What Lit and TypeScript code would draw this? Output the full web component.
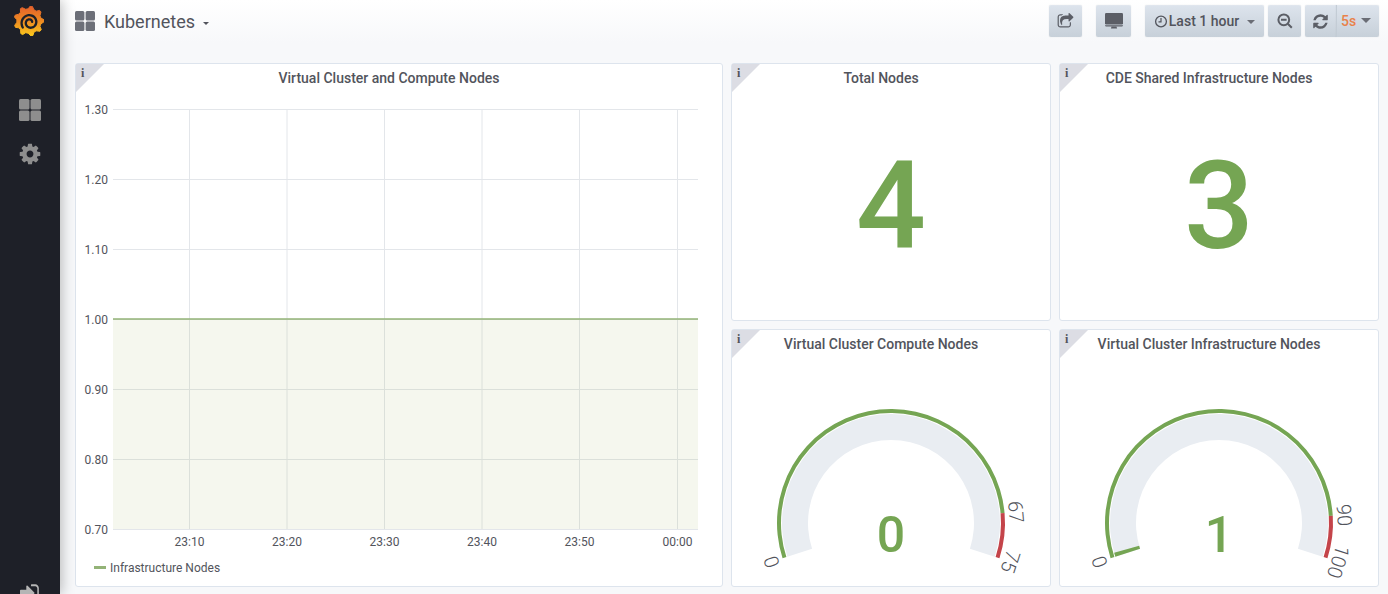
import { LitElement, html, css, svg, unsafeCSS } from "lit";
import { customElement, property } from "lit/decorators.js";

const FA_SHARE = "M1472 989v259q0 119-84.5 203.5t-203.5 84.5h-832q-119 0-203.5-84.5t-84.5-203.5v-832q0-119 84.5-203.5t203.5-84.5h255q13 0 22.5 9.5t9.5 22.5q0 27-26 32-77 26-133 60-10 4-16 4h-112q-66 0-113 47t-47 113v832q0 66 47 113t113 47h832q66 0 113-47t47-113v-214q0-19 18-29 28-13 54-37 16-16 35-8 21 9 21 29zm237-496l-384 384q-18 19-45 19-12 0-25-5-39-17-39-59v-192h-160q-323 0-438 131-119 137-74 473 3 23-20 34-8 2-12 2-16 0-26-13-10-14-21-31t-39.5-68.5-49.5-99.5-38.5-114-17.5-122q0-49 3.5-91t14-90 28-88 47-81.5 68.5-74 94.5-61.5 124.5-48.5 159.5-30.5 196.5-11h160v-192q0-42 39-59 13-5 25-5 26 0 45 19l384 384q19 19 19 45t-19 45z";
const FA_REFRESH = "M1639 1056q0 5-1 7-64 268-268 434.5t-478 166.5q-146 0-282.5-55t-243.5-157l-129 129q-19 19-45 19t-45-19-19-45v-448q0-26 19-45t45-19h448q26 0 45 19t19 45-19 45l-137 137q71 66 161 102t187 36q134 0 250-65t186-179q11-17 53-117 8-23 30-23h192q13 0 22.5 9.5t9.5 22.5zm25-800v448q0 26-19 45t-45 19h-448q-26 0-45-19t-19-45 19-45l138-138q-148-137-349-137-134 0-250 65t-186 179q-11 17-53 117-8 23-30 23h-199q-13 0-22.5-9.5t-9.5-22.5v-7q65-268 270-434.5t480-166.5q146 0 284 55.5t245 156.5l130-129q19-19 45-19t45 19 19 45z";
const FA_COG = "M1152 896q0-106-75-181t-181-75-181 75-75 181 75 181 181 75 181-75 75-181zm512-109v222q0 12-8 23t-20 13l-185 28q-19 54-39 91 35 50 107 138 10 12 10 25t-9 23q-27 37-99 108t-94 71q-12 0-26-9l-138-108q-44 23-91 38-16 136-29 186-7 28-36 28h-222q-14 0-24.5-8.5t-11.5-21.5l-28-184q-49-16-90-37l-141 107q-10 9-25 9-14 0-25-11-126-114-165-168-7-10-7-23 0-12 8-23 15-21 51-66.5t54-70.5q-27-50-41-99l-183-27q-13-2-21-12.5t-8-23.5v-222q0-12 8-23t19-13l186-28q14-46 39-92-40-57-107-138-10-12-10-24 0-10 9-23 26-36 98.5-107.5t94.5-71.5q13 0 26 10l138 107q44-23 91-38 16-136 29-186 7-28 36-28h222q14 0 24.5 8.5t11.5 21.5l28 184q49 16 90 37l142-107q9-9 24-9 13 0 25 10 129 119 165 170 7 8 7 22 0 12-8 23-15 21-51 66.5t-54 70.5q26 50 41 98l183 28q13 2 21 12.5t8 23.5z";
const FA_SIGNIN = "M1184 896q0 26-19 45l-544 544q-19 19-45 19t-45-19-19-45v-288h-448q-26 0-45-19t-19-45v-384q0-26 19-45t45-19h448v-288q0-26 19-45t45-19 45 19l544 544q19 19 19 45zm352-352v704q0 119-84.5 203.5t-203.5 84.5h-320q-32 0-32-32v-96q0-32 32-32h320q66 0 113-47t47-113v-704q0-66-47-113t-113-47h-320q-32 0-32-32v-96q0-32 32-32h320q119 0 203.5 84.5t84.5 203.5z";

const GREEN = "#75a553";
const RED = "#c4444a";

function polar(cx: number, cy: number, r: number, deg: number) {
  const a = (deg * Math.PI) / 180;
  return [cx + r * Math.sin(a), cy - r * Math.cos(a)];
}

// annular sector, angles measured clockwise from the top
function band(cx: number, cy: number, r0: number, r1: number, from: number, to: number) {
  const large = to - from > 180 ? 1 : 0;
  const [ax, ay] = polar(cx, cy, r1, from);
  const [bx, by] = polar(cx, cy, r1, to);
  const [dx, dy] = polar(cx, cy, r0, to);
  const [ex, ey] = polar(cx, cy, r0, from);
  return `M${ax} ${ay}A${r1} ${r1} 0 ${large} 1 ${bx} ${by}L${dx} ${dy}A${r0} ${r0} 0 ${large} 0 ${ex} ${ey}Z`;
}

function gearPoints() {
  const pts: string[] = [];
  const teeth = 9;
  for (let i = 0; i < teeth; i++) {
    const a = (i * 360) / teeth + 10;
    for (const [off, r] of [[-14, 12.2], [-5, 15], [3, 15], [14, 12.2]]) {
      const [x, y] = polar(15, 15, r, a + off);
      pts.push(`${x.toFixed(2)},${y.toFixed(2)}`);
    }
  }
  return pts.join(" ");
}

// logo swirl, running clockwise and inward from the lower left
function swirl() {
  const pts: string[] = [];
  for (let i = 0; i <= 60; i++) {
    const t = i / 60;
    const [x, y] = polar(16, 16.5, 8.8 - 6.6 * t, -125 + 560 * t);
    pts.push(`${x.toFixed(2)} ${y.toFixed(2)}`);
  }
  return `M${pts.join("L")}`;
}

@customElement("gauge-panel")
class GaugePanel extends LitElement {
  @property({ type: Number }) value = 0;
  @property({ type: Number }) threshold = 0;
  @property({ type: Number }) max = 100;

  static styles = css`
    :host {
      display: block;
    }
    svg {
      display: block;
    }
    .tick {
      font: 300 20px Roboto, sans-serif;
      fill: #52545c;
      text-anchor: middle;
      dominant-baseline: central;
    }
    .val {
      font: 500 50px Roboto, sans-serif;
      fill: ${unsafeCSS(GREEN)};
      text-anchor: middle;
    }
  `;

  render() {
    const cx = 159;
    const cy = 165;
    const start = -108;
    const sweep = 216;
    const at = (v: number) => start + (sweep * v) / this.max;
    const ticks = [0, this.threshold, this.max];
    return html`<svg width="318" height="228" viewBox="0 0 318 228">
      <path d=${band(cx, cy, 83, 109, start, start + sweep)} fill="#e9edf2"></path>
      <path d=${band(cx, cy, 110, 114, start, at(this.threshold))} fill=${GREEN}></path>
      <path d=${band(cx, cy, 110, 114, at(this.threshold), start + sweep)} fill=${RED}></path>
      ${this.value > 0
        ? svg`<path d=${band(cx, cy, 83, 109, start, at(this.value))} fill=${GREEN}></path>`
        : ""}
      ${ticks.map((t) => {
        const a = at(t);
        const [x, y] = polar(cx, cy, 125.5, a);
        return svg`<text class="tick" transform="translate(${x} ${y}) rotate(${a})">${t}</text>`;
      })}
      <text class="val" x=${cx} y="194">${this.value}</text>
    </svg>`;
  }
}

@customElement("graph-panel")
class GraphPanel extends LitElement {
  static styles = css`
    :host {
      display: block;
    }
    svg {
      display: block;
    }
    .label {
      font: 400 12px Roboto, sans-serif;
      fill: #52545c;
    }
    .legend {
      display: flex;
      align-items: center;
      gap: 4px;
      height: 19px;
      padding-left: 18px;
      font: 400 12px Roboto, sans-serif;
      color: #52545c;
    }
    .swatch {
      width: 12px;
      height: 3px;
      background: #93b377;
    }
  `;

  render() {
    const ys = ["1.30", "1.20", "1.10", "1.00", "0.90", "0.80", "0.70"];
    const xs = [
      [113.5, "23:10"],
      [211, "23:20"],
      [308.5, "23:30"],
      [406, "23:40"],
      [503.5, "23:50"],
      [601.5, "00:00"],
    ] as [number, string][];
    return html`<svg width="646" height="466" viewBox="0 0 646 466">
        ${xs.map(([x]) => svg`<line x1=${x} x2=${x} y1="17" y2="437" stroke="#e3e6ea"></line>`)}
        ${ys.map((_, i) => svg`<line x1="37" x2="622" y1=${17.5 + i * 70} y2=${17.5 + i * 70} stroke="#e3e6ea"></line>`)}
        <rect x="37" y="227" width="585" height="210" fill="#8fa848" fill-opacity="0.09"></rect>
        <line x1="37" x2="622" y1="227" y2="227" stroke="#93b377" stroke-width="1.5"></line>
        ${ys.map((y, i) => svg`<text class="label" x="32" y=${21.5 + i * 70} text-anchor="end">${y}</text>`)}
        ${xs.map(([x, t]) => svg`<text class="label" x=${x} y="454" text-anchor="middle">${t}</text>`)}
      </svg>
      <div class="legend"><span class="swatch"></span>Infrastructure Nodes</div>`;
  }
}

@customElement("app-root")
class AppRoot extends LitElement {
  static styles = css`
    :host {
      display: flex;
      width: 1388px;
      height: 594px;
      overflow: hidden;
      background: #f7f8fa;
      font-family: Roboto, sans-serif;
      color: #52545c;
    }
    .side {
      flex: none;
      width: 60px;
      height: 594px;
      box-sizing: border-box;
      background: #1e2028;
      box-shadow: 2px 0 12px rgba(0, 0, 0, 0.25);
      display: flex;
      flex-direction: column;
      align-items: center;
      padding-top: 6px;
      position: relative;
      z-index: 1;
    }
    .logo {
      display: block;
      margin-left: -3px;
    }
    .side-grid {
      margin-top: 63px;
      fill: #8e8e8e;
    }
    .side-cog {
      margin-top: 21px;
      fill: #8e8e8e;
    }
    .side-in {
      margin-top: auto;
      margin-bottom: -10px;
      margin-left: 1px;
      fill: #b5b5b5;
    }
    .main {
      flex: 1;
      min-width: 0;
    }
    .top {
      height: 58px;
      padding: 5px 9px 0 15px;
      display: flex;
      align-items: flex-start;
      background: linear-gradient(#fff, #f7f8fa 43px);
    }
    .crumb {
      display: flex;
      align-items: center;
      height: 32px;
      font-size: 18px;
      gap: 9px;
    }
    .crumb-icon {
      fill: #6c6f78;
    }
    .caret {
      width: 0;
      height: 0;
      border: 4px solid transparent;
      border-top-color: currentColor;
      border-bottom: 0;
      margin-top: 3px;
    }
    .crumb .caret {
      margin-left: -1px;
      margin-top: 4px;
      border-width: 3px;
      border-bottom: 0;
    }
    .actions {
      margin-left: auto;
      display: flex;
      align-items: flex-start;
    }
    .btn {
      box-sizing: border-box;
      height: 32px;
      display: flex;
      align-items: center;
      justify-content: center;
      background: linear-gradient(#dde4ed, #c7d0d9);
      border-radius: 2px;
      box-shadow: inset 0 1px 0 rgba(255, 255, 255, 0.1), 0 0 1px rgba(82, 84, 92, 0.25);
      color: #52545c;
      fill: #5b5e66;
      font-size: 14px;
      font-weight: 500;
    }
    .share {
      width: 33px;
    }
    .tv {
      width: 35px;
      margin-left: 14px;
    }
    .range {
      width: 119px;
      margin-left: 14px;
      gap: 1px;
    }
    .range .caret {
      margin-left: 7px;
      margin-top: 1px;
      color: #6a6d75;
    }
    .zoom {
      width: 33px;
      margin-left: 4px;
    }
    .refresh {
      width: 31px;
      margin-left: 4px;
      border-radius: 2px 0 0 2px;
    }
    .interval {
      width: 43px;
      justify-content: flex-start;
      padding-left: 4px;
      border-radius: 0 2px 2px 0;
      border-left: 1px solid #c3ccd5;
      color: #e9824a;
      gap: 5px;
    }
    .interval .caret {
      color: #6a6d75;
      margin-top: -2px;
      border-width: 5px;
      border-bottom: 0;
    }
    .grid {
      display: grid;
      grid-template-columns: 648px 320px 320px;
      grid-template-rows: 258px 258px;
      gap: 8px;
      padding-left: 15px;
    }
    .panel {
      position: relative;
      box-sizing: border-box;
      background: #fff;
      border: 1px solid #dde4ed;
      border-radius: 3px;
      display: flex;
      flex-direction: column;
      min-width: 0;
    }
    .tall {
      grid-row: span 2;
    }
    .title {
      flex: none;
      height: 28px;
      box-sizing: border-box;
      padding: 6px 20px 0 0;
      text-align: center;
      font-size: 14px;
      font-weight: 500;
      line-height: 17px;
    }
    .corner {
      position: absolute;
      left: 0;
      top: 0;
      width: 28px;
      height: 28px;
      background: #dcdde4;
      clip-path: polygon(0 0, 100% 0, 0 100%);
    }
    .corner-i {
      position: absolute;
      left: 5px;
      top: 2px;
      font: 700 12px "Liberation Serif", serif;
      line-height: 14px;
      color: #52545c;
    }
    .stat {
      flex: 1;
      display: flex;
      align-items: center;
      justify-content: center;
      font-size: 123px;
      font-weight: 500;
      line-height: 1;
      color: ${unsafeCSS(GREEN)};
    }
  `;

  private corner() {
    return html`<div class="corner"></div><span class="corner-i">i</span>`;
  }

  render() {
    return html`
      <nav class="side">
        <svg class="logo" width="30" height="30" viewBox="0 0 30 30">
          <defs>
            <linearGradient id="lg" x1="0" y1="0" x2="0" y2="1">
              <stop offset="0" stop-color="#e4602c"></stop>
              <stop offset="0.5" stop-color="#ee8a22"></stop>
              <stop offset="1" stop-color="#fbc81c"></stop>
            </linearGradient>
          </defs>
          <polygon points=${gearPoints()} fill="url(#lg)" stroke="url(#lg)" stroke-linejoin="round"></polygon>
          <path d=${swirl()} fill="none" stroke="#1e2028" stroke-width="2.3" stroke-linecap="round"></path>
        </svg>
        <svg class="side-grid" width="22" height="22" viewBox="0 0 22 22">
          <rect width="10.5" height="10.5" rx="1.5"></rect>
          <rect x="11.5" width="10.5" height="10.5" rx="1.5"></rect>
          <rect y="11.5" width="10.5" height="10.5" rx="1.5"></rect>
          <rect x="11.5" y="11.5" width="10.5" height="10.5" rx="1.5"></rect>
        </svg>
        <svg class="side-cog" width="24" height="24" viewBox="0 0 1792 1792"><path d=${FA_COG}></path></svg>
        <svg class="side-in" width="22" height="22" viewBox="0 0 1792 1792"><path d=${FA_SIGNIN}></path></svg>
      </nav>
      <div class="main">
        <header class="top">
          <div class="crumb">
            <svg class="crumb-icon" width="20" height="20" viewBox="0 0 20 20">
              <rect width="9.4" height="9.4" rx="1.5"></rect>
              <rect x="10.6" width="9.4" height="9.4" rx="1.5"></rect>
              <rect y="10.6" width="9.4" height="9.4" rx="1.5"></rect>
              <rect x="10.6" y="10.6" width="9.4" height="9.4" rx="1.5"></rect>
            </svg>
            <span>Kubernetes</span>
            <span class="caret"></span>
          </div>
          <div class="actions">
            <div class="btn share">
              <svg width="17" height="17" viewBox="0 0 1792 1792"><path d=${FA_SHARE}></path></svg>
            </div>
            <div class="btn tv">
              <svg width="18" height="16" viewBox="0 0 18 16">
                <rect width="18" height="11.5" rx="1.2"></rect>
                <path d="M0 12.2h18v.3a1.2 1.2 0 0 1-1.2 1H1.2a1.2 1.2 0 0 1-1.2-1z"></path>
                <path d="M6.5 13.5h5l.6 2h-6.2z"></path>
              </svg>
            </div>
            <div class="btn range">
              <svg width="14" height="14" viewBox="0 0 14 14">
                <circle cx="7" cy="7.5" r="5.4" fill="none" stroke="#52545c" stroke-width="1.3"></circle>
                <path d="M7 4v3.9H4.5" fill="none" stroke="#52545c" stroke-width="1.2"></path>
              </svg>
              <span>Last 1 hour</span>
              <span class="caret"></span>
            </div>
            <div class="btn zoom">
              <svg width="16" height="16" viewBox="0 0 16 16">
                <circle cx="6.8" cy="6.8" r="5.4" fill="none" stroke="#5b5e66" stroke-width="2"></circle>
                <path d="M4 6.8h5.6M10.8 10.8l4 4" fill="none" stroke="#5b5e66" stroke-width="2"></path>
              </svg>
            </div>
            <div class="btn refresh">
              <svg width="17" height="17" viewBox="0 0 1792 1792"><path d=${FA_REFRESH}></path></svg>
            </div>
            <div class="btn interval"><span>5s</span><span class="caret"></span></div>
          </div>
        </header>
        <div class="grid">
          <section class="panel tall">
            ${this.corner()}
            <div class="title">Virtual Cluster and Compute Nodes</div>
            <graph-panel></graph-panel>
          </section>
          <section class="panel">
            ${this.corner()}
            <div class="title">Total Nodes</div>
            <div class="stat">4</div>
          </section>
          <section class="panel">
            ${this.corner()}
            <div class="title">CDE Shared Infrastructure Nodes</div>
            <div class="stat">3</div>
          </section>
          <section class="panel">
            ${this.corner()}
            <div class="title">Virtual Cluster Compute Nodes</div>
            <gauge-panel .value=${0} .threshold=${67} .max=${75}></gauge-panel>
          </section>
          <section class="panel">
            ${this.corner()}
            <div class="title">Virtual Cluster Infrastructure Nodes</div>
            <gauge-panel .value=${1} .threshold=${90} .max=${100}></gauge-panel>
          </section>
        </div>
      </div>
    `;
  }
}
